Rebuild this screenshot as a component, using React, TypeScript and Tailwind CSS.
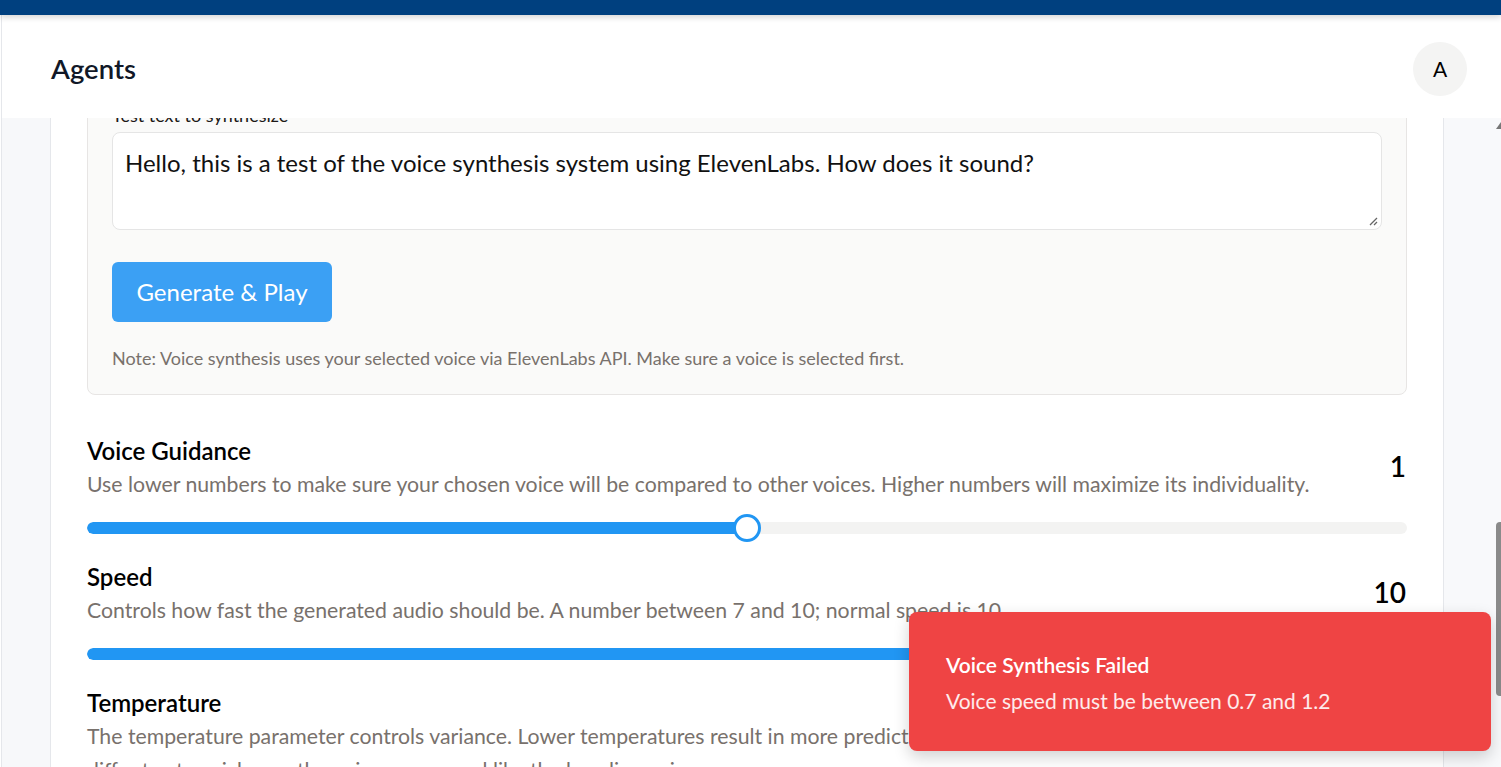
import React from 'react'

type SliderProps = {
  pct: number
  showThumb?: boolean
}

function Slider({ pct, showThumb = true }: SliderProps) {
  return (
    <div className="relative flex h-[28px] items-center">
      <div className="h-[12px] w-full overflow-hidden rounded-full bg-[#f3f3f2]">
        <div className="h-full rounded-full bg-[#2196f3]" style={{ width: `${pct}%` }} />
      </div>
      {showThumb && (
        <div
          className="absolute top-0 h-[28px] w-[28px] -translate-x-1/2 rounded-full border-[3px] border-[#2196f3] bg-white"
          style={{ left: `${pct}%` }}
        />
      )}
    </div>
  )
}

type SettingProps = {
  title: string
  value: string
  pct: number
  children: React.ReactNode
}

function Setting({ title, value, pct, children }: SettingProps) {
  return (
    <div className="flex flex-col pb-[19px]">
      <div className="flex items-center justify-between">
        <div className="flex flex-col">
          <div className="h-[32px] text-[24px] leading-[32px] font-semibold text-black">{title}</div>
          <div className="text-[21.25px] leading-[34px] text-[#78716c]">{children}</div>
        </div>
        <div className="mb-[4px] pr-px text-[28px] leading-[32px] font-semibold text-black">{value}</div>
      </div>
      <div className="mt-[13px]">
        <Slider pct={pct} />
      </div>
    </div>
  )
}

export default function App() {
  return (
    <div className="relative flex h-screen w-full flex-col overflow-hidden bg-white font-['Lato','Noto_Sans',sans-serif]">
      <div className="relative z-10 h-[15px] shrink-0 bg-[#00407f] shadow-[0_2px_6px_rgba(0,0,0,0.18)]" />

      <div className="ml-px flex min-h-0 flex-1 flex-col border-l border-[#e5e7eb]">
        <header className="relative z-[5] flex h-[103px] shrink-0 items-center justify-between bg-white pt-[5px] pl-[49px] pr-[34px]">
          <h1 className="text-[27.5px] font-semibold text-[#111827]">Agents</h1>
          <div className="flex h-[54px] w-[54px] items-center justify-center rounded-full bg-[#f4f4f3] text-[21px] text-black">
            A
          </div>
        </header>

        <div className="flex min-h-0 flex-1">
          <div className="w-[49px] shrink-0 border-r border-[#e5e7eb] bg-[#f7f8fa]" />

          <main className="min-w-0 flex-1 overflow-hidden border-r border-[#e5e7eb] bg-white px-[36px]">
            <section className="mt-[-38px] rounded-lg border border-[#e7e5e4] bg-[#fafaf9] px-[24px] pt-[24px] pb-[24px]">
              <label className="block h-[24px] text-[18px] leading-[20px] text-[#1c1917]">
                Test text to synthesize
              </label>
              <div className="relative mt-[3px] h-[98px] rounded-lg border border-[#e5e5e5] bg-white px-[12px] py-[14px] text-[24px] leading-[32px] text-[#111]">
                Hello, this is a test of the voice synthesis system using ElevenLabs. How does it sound?
                <svg
                  className="absolute right-[3px] bottom-[3px]"
                  width="10"
                  height="10"
                  viewBox="0 0 10 10"
                >
                  <path d="M9 2 L2 9 M9 6 L6 9" stroke="#666" strokeWidth="1.3" />
                </svg>
              </div>
              <button className="mt-[32px] h-[60px] w-[220px] rounded-md bg-[#3ba0f4] text-[24px] text-white">
                Generate &amp; Play
              </button>
              <p className="mt-[24px] text-[18px] leading-[24px] text-[#78716c]">
                Note: Voice synthesis uses your selected voice via ElevenLabs API. Make sure a voice is selected
                first.
              </p>
            </section>

            <div className="mt-[40px] flex flex-col">
              <Setting title="Voice Guidance" value="1" pct={50}>
                Use lower numbers to make sure your chosen voice will be compared to other voices. Higher numbers
                will maximize its individuality.
              </Setting>
              <Setting title="Speed" value="10" pct={100}>
                Controls how fast the generated audio should be. A number between 7 and 10; normal speed is 10.
              </Setting>
              <Setting title="Temperature" value="0.5" pct={50}>
                The temperature parameter controls variance. Lower temperatures result in more predictable output;
                higher ones let the voice
                <br />
                differ to stay niche, so the voice may sound like the baseline voice.
              </Setting>
            </div>
          </main>

          <div className="flex w-[57px] shrink-0 flex-col items-end bg-[#f8f9fb]">
            <svg className="mt-[4px]" width="5" height="7" viewBox="0 0 5 7">
              <path d="M5 0 L5 7 L0 7 Z" fill="#777" />
            </svg>
            <div className="mt-[393px] h-[174px] w-[5px] rounded-l-[4px] bg-[#8a8a8a]" />
          </div>
        </div>
      </div>

      <div className="absolute right-[10px] bottom-[16px] z-20 h-[139px] w-[582px] rounded-lg bg-[#ef4444] px-[37px] pt-[40px] text-white shadow-[0_6px_16px_rgba(0,0,0,0.18)]">
        <div className="text-[21px] leading-[26px] font-semibold">Voice Synthesis Failed</div>
        <div className="mt-[10px] text-[21px] leading-[26px] text-white/90">
          Voice speed must be between 0.7 and 1.2
        </div>
      </div>
    </div>
  )
}
